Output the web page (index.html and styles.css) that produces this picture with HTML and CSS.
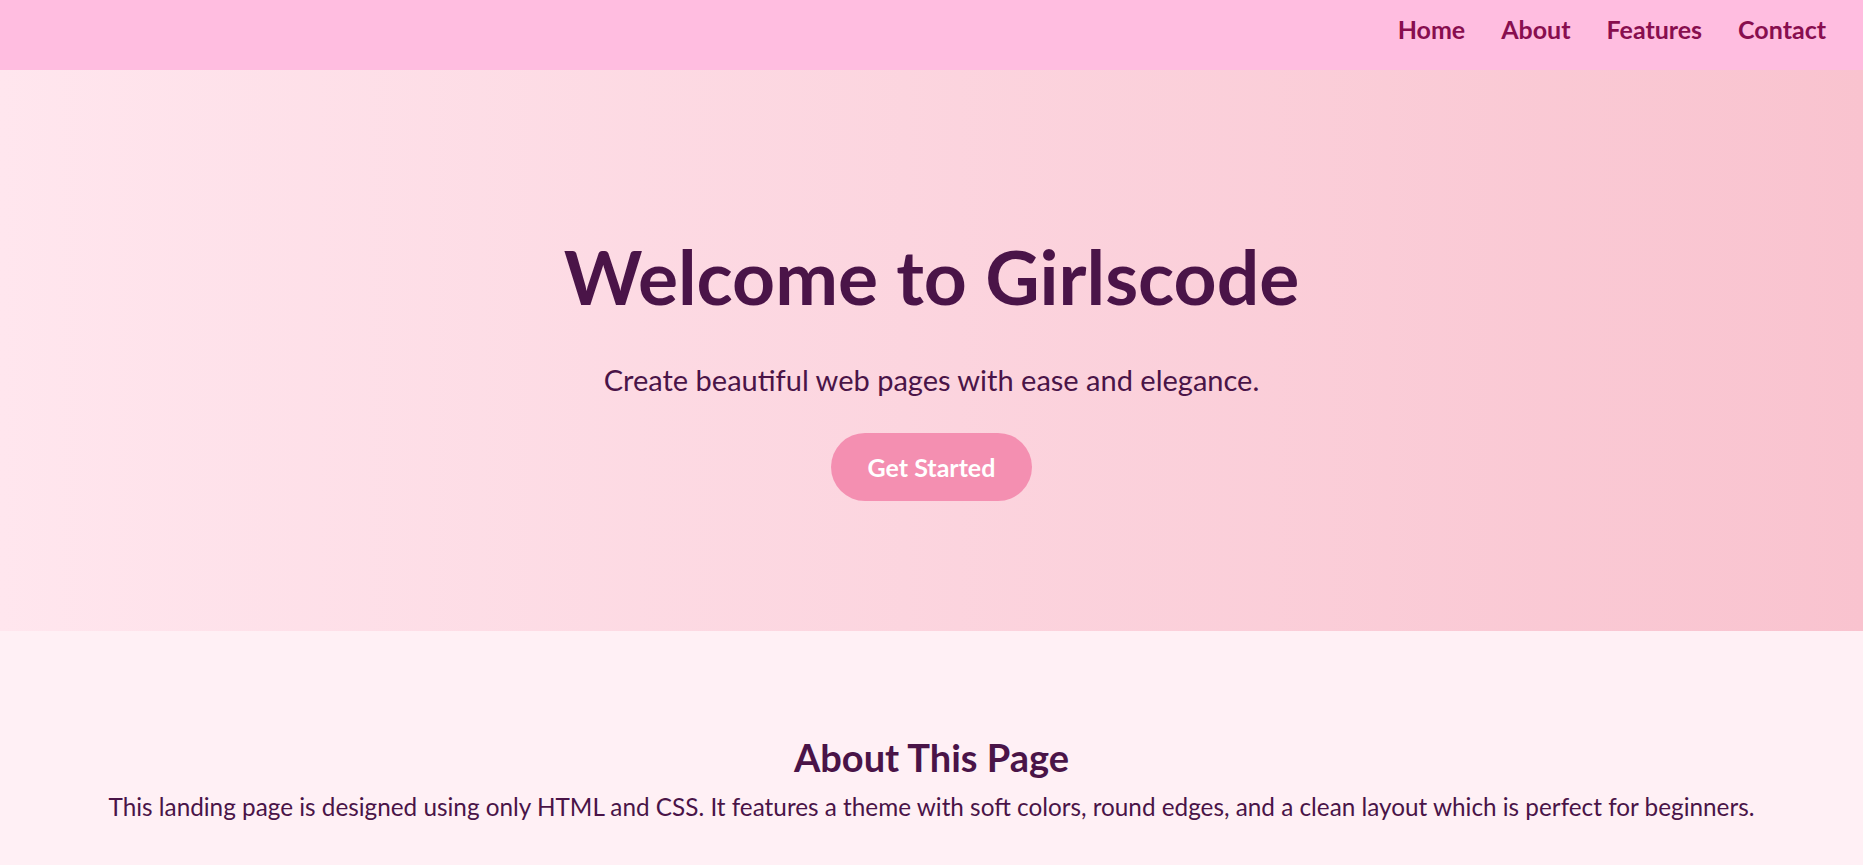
FILE: index.html
```html
<!DOCTYPE html>
<html lang="en">
<head>
<meta charset="utf-8">
<title>Girlscode</title>
<link rel="stylesheet" href="styles.css">
</head>
<body>
<header class="site-header">
  <nav class="nav">
    <a href="#" class="nav-link">Home</a>
    <a href="#" class="nav-link">About</a>
    <a href="#" class="nav-link">Features</a>
    <a href="#" class="nav-link">Contact</a>
  </nav>
</header>
<section class="hero">
  <h1 class="hero-title">Welcome to Girlscode</h1>
  <p class="hero-sub">Create beautiful web pages with ease and elegance.</p>
  <a href="#" class="btn">Get Started</a>
</section>
<section class="about">
  <h2 class="about-title">About This Page</h2>
  <p class="about-text">This landing page is designed using only HTML and CSS. It features a theme with soft colors, round edges, and a clean layout which is perfect for beginners.</p>
</section>
</body>
</html>
```
FILE: styles.css
```css
* { box-sizing: border-box; }
body {
  margin: 0;
  font-family: Lato, "Open Sans", sans-serif;
  background: #fff0f5;
  color: #4a1448;
}
.site-header {
  height: 70px;
  background: #ffbde0;
  display: flex;
  justify-content: flex-end;
  align-items: center;
  padding: 0 37px 12px 0;
}
.nav {
  display: flex;
  gap: 36px;
}
.nav-link {
  color: #880e4f;
  text-decoration: none;
  font-weight: 700;
  font-size: 25px;
}
.hero {
  height: 561px;
  background: linear-gradient(to right, #ffe6ee, #f9c3cf);
  display: flex;
  flex-direction: column;
  align-items: center;
  justify-content: flex-start;
  padding-top: 161px;
  text-align: center;
}
.hero-title {
  margin: 0;
  font-size: 75px;
  font-weight: 700;
  line-height: 90px;
  color: #4a1448;
}
.hero-sub {
  margin: 41px 0 36px;
  font-size: 29px;
  line-height: 35px;
  color: #4a1448;
}
.btn {
  display: inline-block;
  background: #f48fb1;
  color: #fff;
  text-decoration: none;
  font-weight: 700;
  font-size: 25px;
  line-height: 30px;
  padding: 19px 37px;
  border-radius: 40px;
}
.about {
  padding: 103px 20px 40px;
  text-align: center;
}
.about-title {
  margin: 0 0 12px;
  font-size: 38px;
  font-weight: 700;
  color: #4a1448;
}
.about-text {
  margin: 0;
  font-size: 24.3px;
  color: #4a1448;
}
```
